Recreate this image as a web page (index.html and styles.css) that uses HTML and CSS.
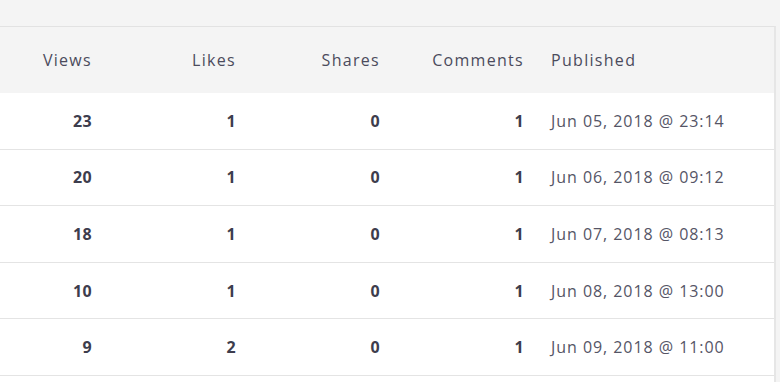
FILE: index.html
```html
<!DOCTYPE html>
<html>
<head>
<meta charset="utf-8">
<link rel="stylesheet" href="styles.css">
</head>
<body>
<div class="page">
  <div class="card">
    <table class="stats">
      <colgroup>
        <col class="c-views"><col class="c-num"><col class="c-num"><col class="c-num"><col class="c-date">
      </colgroup>
      <thead>
        <tr><th class="num">Views</th><th class="num">Likes</th><th class="num">Shares</th><th class="num">Comments</th><th class="date">Published</th></tr>
      </thead>
      <tbody>
        <tr><td class="num">23</td><td class="num">1</td><td class="num">0</td><td class="num">1</td><td class="date">Jun 05, 2018 @ 23:14</td></tr>
        <tr><td class="num">20</td><td class="num">1</td><td class="num">0</td><td class="num">1</td><td class="date">Jun 06, 2018 @ 09:12</td></tr>
        <tr><td class="num">18</td><td class="num">1</td><td class="num">0</td><td class="num">1</td><td class="date">Jun 07, 2018 @ 08:13</td></tr>
        <tr><td class="num">10</td><td class="num">1</td><td class="num">0</td><td class="num">1</td><td class="date">Jun 08, 2018 @ 13:00</td></tr>
        <tr><td class="num">9</td><td class="num">2</td><td class="num">0</td><td class="num">1</td><td class="date">Jun 09, 2018 @ 11:00</td></tr>
      </tbody>
    </table>
  </div>
</div>
</body>
</html>
```
FILE: styles.css
```css
html, body {
  margin: 0;
  padding: 0;
  background: #f4f4f4;
}
body {
  font-family: "Open Sans", Lato, sans-serif;
  color: #474757;
}
.page {
  padding-top: 26px;
  width: 776px;
}
.card {
  background: #ffffff;
  border-top: 1px solid #e2e2e2;
  border-right: 2px solid #e6e6e6;
  padding-bottom: 6px;
}
.stats {
  width: 100%;
  border-collapse: collapse;
  table-layout: fixed;
}
.c-views { width: 105px; }
.c-num { width: 144px; }
.stats th {
  background: #f4f4f4;
  font-weight: 400;
  font-size: 16px;
  letter-spacing: 1.3px;
  color: #4b4b5c;
  height: 66px;
  padding: 0 13px 0 14px;
}
.stats td {
  font-size: 16px;
  height: 55.6px;
  padding: 0 13px 0 14px;
  border-bottom: 1px solid #e4e4e4;
}
.stats .num { text-align: right; }
.stats .date { text-align: left; }
.stats td.num {
  font-weight: 700;
  letter-spacing: 0.3px;
  color: #3d3d4d;
}
.stats td.date {
  letter-spacing: 0.95px;
  color: #555566;
}
```
